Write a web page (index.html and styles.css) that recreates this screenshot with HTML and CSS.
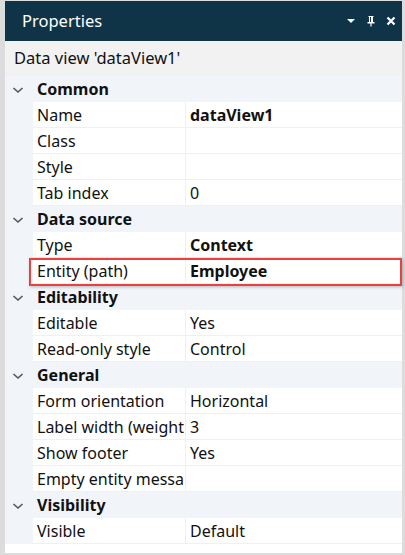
FILE: index.html
```html
<!DOCTYPE html>
<html>
<head>
<meta charset="utf-8">
<link rel="stylesheet" href="styles.css">
</head>
<body>
<div class="frame">
  <div class="panel">
    <div class="titlebar">
      <span class="title">Properties</span>
      <div class="tools">
        <svg width="10" height="10" viewBox="0 0 10 10"><path d="M1 3h8L5 7z" fill="#fff"/></svg>
        <svg width="10" height="12" viewBox="0 0 10 12"><path d="M2.5 1h5v1H7v5h1.5v1.5H5.6V11.5H4.4V8.5H1.5V7H3V2H2.5z M4 2v5h1V2z" fill="#fff" fill-rule="evenodd"/></svg>
        <svg width="10" height="10" viewBox="0 0 10 10"><path d="M1.5 1.5l7 7M8.5 1.5l-7 7" stroke="#fff" stroke-width="2.2"/></svg>
      </div>
    </div>
    <div class="subject">Data view 'dataView1'</div>
    <div class="grid">
      <div class="cat"><span class="chev"><svg width="12" height="8" viewBox="0 0 12 8"><path d="M1.5 2l4.5 4 4.5-4" fill="none" stroke="#555" stroke-width="1.6"/></svg></span><span class="catname">Common</span></div>
      <div class="prop"><span class="gut"></span><span class="pn">Name</span><span class="pv bold">dataView1</span></div>
      <div class="prop"><span class="gut"></span><span class="pn">Class</span><span class="pv"></span></div>
      <div class="prop"><span class="gut"></span><span class="pn">Style</span><span class="pv"></span></div>
      <div class="prop"><span class="gut"></span><span class="pn">Tab index</span><span class="pv">0</span></div>
      <div class="cat"><span class="chev"><svg width="12" height="8" viewBox="0 0 12 8"><path d="M1.5 2l4.5 4 4.5-4" fill="none" stroke="#555" stroke-width="1.6"/></svg></span><span class="catname">Data source</span></div>
      <div class="prop"><span class="gut"></span><span class="pn">Type</span><span class="pv bold">Context</span></div>
      <div class="prop hl"><span class="gut"></span><span class="pn">Entity (path)</span><span class="pv bold">Employee</span><span class="box"></span></div>
      <div class="cat"><span class="chev"><svg width="12" height="8" viewBox="0 0 12 8"><path d="M1.5 2l4.5 4 4.5-4" fill="none" stroke="#555" stroke-width="1.6"/></svg></span><span class="catname">Editability</span></div>
      <div class="prop"><span class="gut"></span><span class="pn">Editable</span><span class="pv">Yes</span></div>
      <div class="prop"><span class="gut"></span><span class="pn">Read-only style</span><span class="pv">Control</span></div>
      <div class="cat"><span class="chev"><svg width="12" height="8" viewBox="0 0 12 8"><path d="M1.5 2l4.5 4 4.5-4" fill="none" stroke="#555" stroke-width="1.6"/></svg></span><span class="catname">General</span></div>
      <div class="prop"><span class="gut"></span><span class="pn">Form orientation</span><span class="pv">Horizontal</span></div>
      <div class="prop"><span class="gut"></span><span class="pn">Label width (weight</span><span class="pv">3</span></div>
      <div class="prop"><span class="gut"></span><span class="pn">Show footer</span><span class="pv">Yes</span></div>
      <div class="prop"><span class="gut"></span><span class="pn">Empty entity messa</span><span class="pv"></span></div>
      <div class="cat"><span class="chev"><svg width="12" height="8" viewBox="0 0 12 8"><path d="M1.5 2l4.5 4 4.5-4" fill="none" stroke="#555" stroke-width="1.6"/></svg></span><span class="catname">Visibility</span></div>
      <div class="prop"><span class="gut"></span><span class="pn">Visible</span><span class="pv">Default</span></div>
    </div>
  </div>
</div>
</body>
</html>
```
FILE: styles.css
```css
* { box-sizing: border-box; }
html, body { margin: 0; padding: 0; }
body {
  width: 405px; height: 555px;
  background: #dcdcdc;
  font-family: "Noto Sans", "Open Sans", sans-serif;
  font-size: 16px;
  color: #111;
  overflow: hidden;
}
.frame {
  padding: 1px 3px 2px 5px;
  height: 555px;
}
.panel {
  background: #fff;
  height: 100%;
  display: flex;
  flex-direction: column;
}
.titlebar {
  height: 40px;
  background: #0f3447;
  display: flex;
  align-items: center;
  padding: 0 6px 0 17px;
  color: #fff;
}
.title { font-size: 16.5px; flex: 1; padding-bottom: 2px; }
.tools { display: flex; align-items: center; gap: 10px; }
.tools svg { display: block; }
.subject {
  height: 34px;
  background: #f2f2f2;
  display: flex;
  align-items: center;
  padding-left: 9px;
  padding-bottom: 2px;
  font-size: 16.5px;
}
.grid {
  display: flex;
  flex-direction: column;
  border-top: 1px solid #eef2f7;
}
.cat {
  height: 26px;
  background: #f1f5fa;
  display: flex;
  align-items: center;
  font-weight: bold;
}
.chev { width: 26px; display: flex; justify-content: center; padding-top: 1px; }
.catname { padding-left: 6px; }
.prop {
  height: 26px;
  display: flex;
  position: relative;
}
.gut { width: 28px; background: #f1f5fa; flex: none; }
.pn {
  width: 153px; flex: none;
  padding-left: 4px;
  border-bottom: 1px solid #edf0f4;
  border-right: 1px solid #edf0f4;
  white-space: nowrap; overflow: hidden;
  display: flex; align-items: center;
}
.pv {
  flex: 1;
  padding-left: 4px;
  border-bottom: 1px solid #edf0f4;
  display: flex; align-items: center;
}
.bold { font-weight: bold; }
.box {
  position: absolute;
  left: 24px; right: 0; top: 0; bottom: -2px;
  border: 2px solid #e8413f;
  box-shadow: 1px 1px 3px rgba(0,0,0,0.25);
}
```
